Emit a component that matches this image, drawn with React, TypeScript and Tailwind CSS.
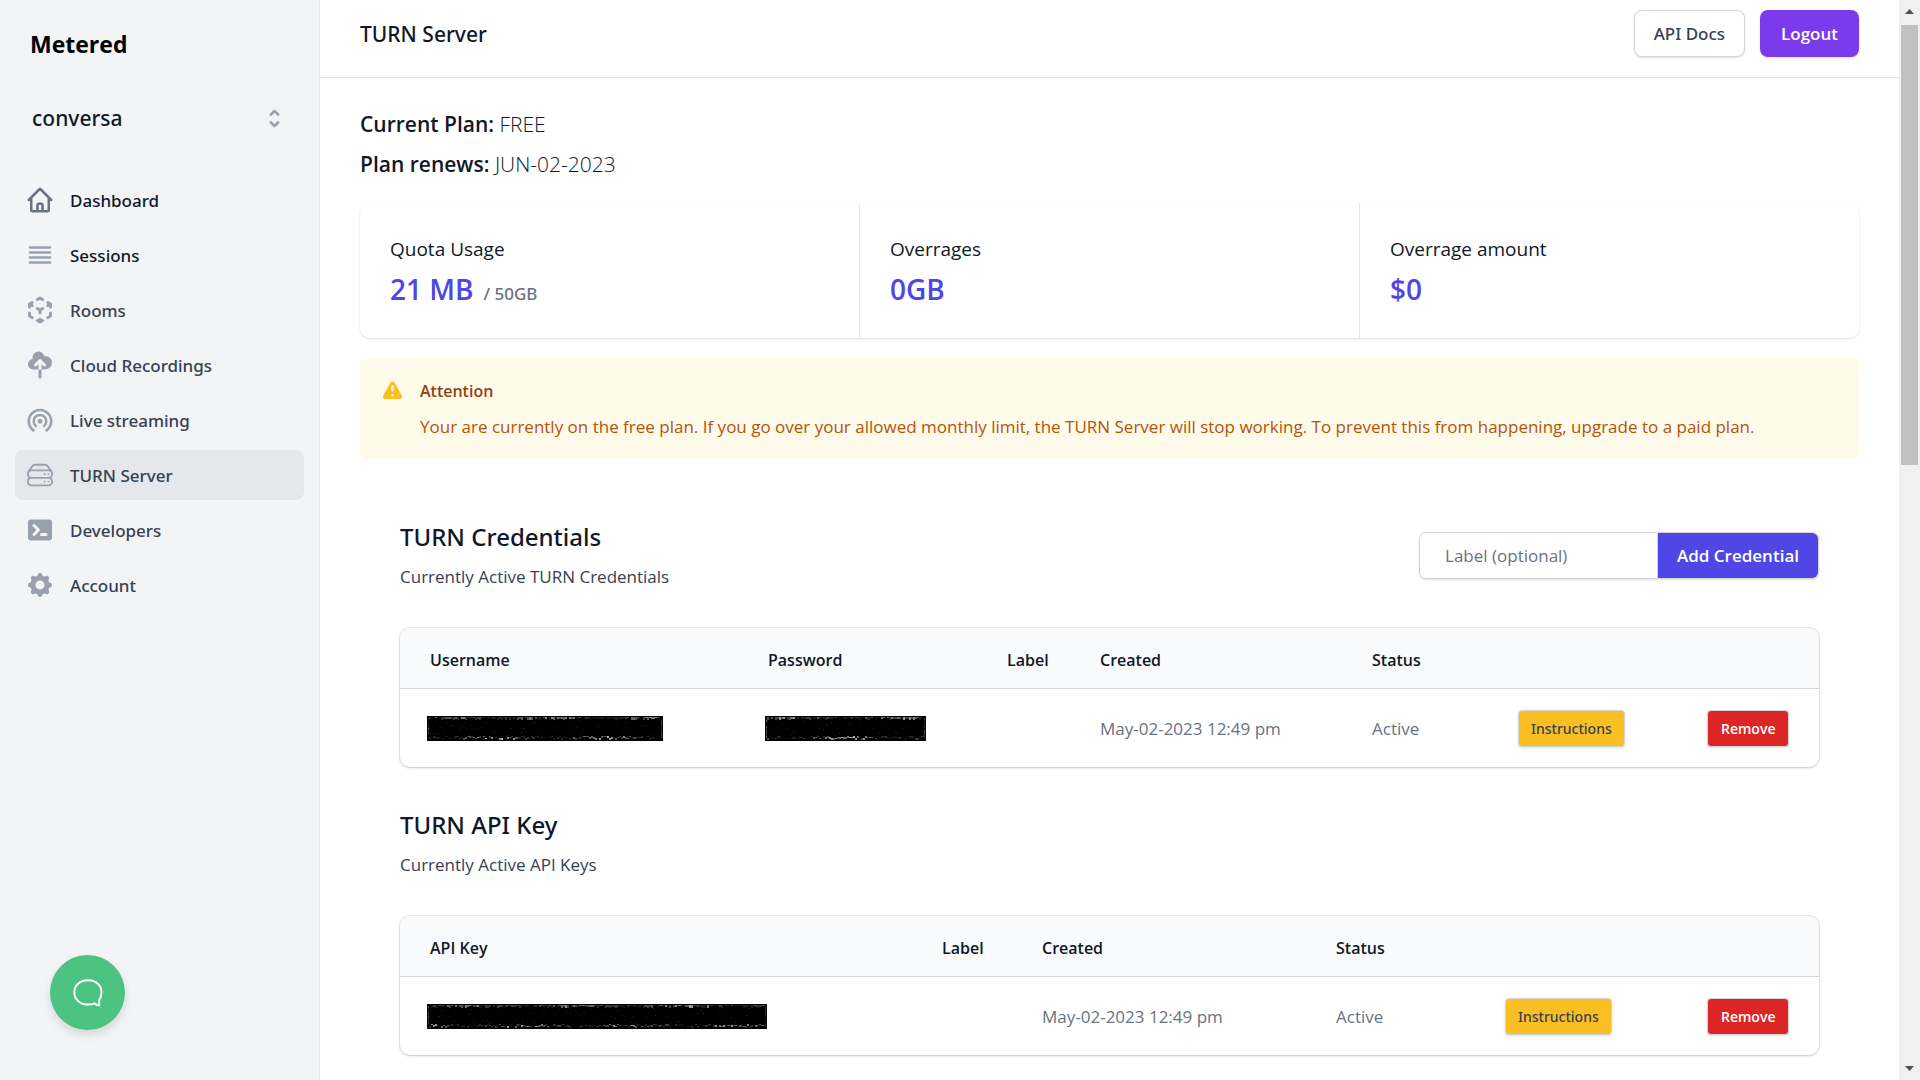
import type { ReactNode } from "react";
import {
  HiCloudUpload,
  HiCog,
  HiCubeTransparent,
  HiExclamation,
  HiOutlineHome,
  HiOutlineViewList,
  HiSelector,
  HiTerminal,
} from "react-icons/hi";
import { HiOutlineServerStack } from "react-icons/hi2";
import { MdWifiTethering } from "react-icons/md";

const navItems = [
  { label: "Dashboard", Icon: HiOutlineHome, text: "text-gray-900", icon: "text-gray-500" },
  { label: "Sessions", Icon: HiOutlineViewList, text: "text-gray-900", icon: "text-gray-400" },
  { label: "Rooms", Icon: HiCubeTransparent, text: "text-gray-700", icon: "text-gray-400" },
  { label: "Cloud Recordings", Icon: HiCloudUpload, text: "text-gray-700", icon: "text-gray-400" },
  { label: "Live streaming", Icon: MdWifiTethering, text: "text-gray-700", icon: "text-gray-400" },
  { label: "TURN Server", Icon: HiOutlineServerStack, text: "text-gray-700", icon: "text-gray-400", active: true },
  { label: "Developers", Icon: HiTerminal, text: "text-gray-700", icon: "text-gray-400" },
  { label: "Account", Icon: HiCog, text: "text-gray-700", icon: "text-gray-400" },
];

/* Black bar with pale specks along its edges, hiding a secret value. */
function Redacted({ width, seed, label }: { width: number; seed: number; label: string }) {
  let s = seed;
  const rnd = () => {
    s = (s * 1103515245 + 12345) % 2147483648;
    return s / 2147483648;
  };
  const specks: ReactNode[] = [];
  for (let x = 2; x < width - 3; x += 2) {
    const wave = 0.5 + 0.5 * Math.sin(x / 17 + seed);
    specks.push(
      <rect key={`t${x}`} x={x} y={1} width={2} height={1 + Math.round(rnd() * 2)} opacity={rnd() * 0.65 * (0.35 + wave * 0.65)} />,
      <rect key={`b${x}`} x={x} y={20 + Math.round(rnd() * 2)} width={2} height={1 + Math.round(rnd())} opacity={rnd() * 0.75 * (1 - wave * 0.8)} />,
      <rect key={`m${x}`} x={x} y={4 + Math.round(rnd() * 16)} width={1} height={1} opacity={rnd() * 0.15} />,
    );
  }
  for (let y = 2; y < 22; y += 2) {
    specks.push(
      <rect key={`l${y}`} x={1} y={y} width={1} height={2} opacity={rnd() * 0.4} />,
      <rect key={`r${y}`} x={width - 2} y={y} width={1} height={2} opacity={rnd() * 0.3} />,
    );
  }
  return (
    <svg role="img" aria-label={label} width={width} height={25} viewBox={`0 0 ${width} 25`} className="-ml-[3px] block bg-black" fill="#fff">
      {specks}
    </svg>
  );
}

function Sidebar() {
  return (
    <aside className="flex w-80 shrink-0 flex-col border-r border-gray-200 bg-gray-100">
      <div className="px-[30px] pt-7 text-[23px] leading-8 font-bold text-black">Metered</div>
      <button
        type="button"
        className="mx-8 mt-10 flex items-center justify-between text-left font-['Noto_Sans',sans-serif] text-[21px] leading-9 font-medium text-gray-900"
      >
        conversa
        <HiSelector className="size-[25px] text-gray-400" />
      </button>
      <nav className="mt-[39px] flex flex-col gap-[5px] px-[15px] font-['Noto_Sans',sans-serif]">
        {navItems.map(({ label, Icon, text, icon, active }) => (
          <a
            key={label}
            href="#"
            aria-current={active ? "page" : undefined}
            className={`flex h-[50px] items-center gap-[15px] rounded-lg px-2.5 text-[17px] font-medium ${text} ${active ? "bg-gray-200" : ""}`}
          >
            <Icon className={`size-[30px] shrink-0 ${icon}`} />
            <span className="pt-0.5">{label}</span>
          </a>
        ))}
      </nav>
      <button type="button" aria-label="Open chat" className="mt-auto mb-[50px] ml-[50px] flex size-[75px] items-center justify-center rounded-full bg-[#4cc380] shadow-[0_5px_10px_rgba(0,0,0,0.12)]">
        <svg width="30" height="28" viewBox="0 0 30 28" fill="none" stroke="#fff" strokeWidth="2" strokeLinejoin="round">
          <path d="M15 1.2C22.500 1.200 28.500 5.800 28.500 13.200C28.500 16.600 27.600 19 26.200 20.800V26.600C24.300 26.300 22.800 25.600 21.400 24.300C19.300 25.300 17 25.600 15 25.600C7.300 25.600 1.300 20.600 1.300 13.200C1.300 5.800 7.500 1.200 15 1.200Z" />
        </svg>
      </button>
    </aside>
  );
}

function Stat({ label, value, note }: { label: string; value: string; note?: string }) {
  return (
    <div className="flex-1 px-[30px] pt-[30px] pb-[26px]">
      <dt className="text-[19px] leading-8 text-gray-900">{label}</dt>
      <dd className="mt-1 flex h-[43px] items-baseline gap-2.5 text-[28px] leading-10 font-semibold text-[#4f46e5]">
        {value}
        {note && <span className="font-['Noto_Sans',sans-serif] text-[17px] leading-6 font-medium text-gray-500">{note}</span>}
      </dd>
    </div>
  );
}

function SectionTitle({ title, sub }: { title: string; sub: string }) {
  return (
    <div>
      <h2 className="font-['Noto_Sans',sans-serif] text-[24px] leading-[35px] font-medium text-gray-900">{title}</h2>
      <p className="mt-2.5 text-[17px] leading-[25px] text-gray-700">{sub}</p>
    </div>
  );
}

type Column = { head: string; width: string; cell: ReactNode };

function KeyTable({ columns }: { columns: Column[] }) {
  return (
    <div className="mt-[39px] overflow-hidden rounded-[10px] shadow-[0_0_0_1px_rgba(0,0,0,0.08),0_1px_3px_rgba(0,0,0,0.15)]">
      <table className="w-full table-fixed text-left text-[17px]">
        <thead className="bg-gray-50 text-gray-900">
          <tr className="h-[60px] border-b border-gray-300">
            {columns.map((c, i) => (
              <th
                key={i}
                scope="col"
                aria-label={c.head || "Action"}
                className={`pt-1 pl-[15px] text-[16px] font-semibold first:pl-[30px] ${c.width}`}
              >
                {c.head}
              </th>
            ))}
          </tr>
        </thead>
        <tbody className="text-gray-500">
          <tr className="h-[79px]">
            {columns.map((c, i) => (
              <td key={i} className="pt-0.5 pl-[15px] whitespace-nowrap first:pl-[30px]">
                {c.cell}
              </td>
            ))}
          </tr>
        </tbody>
      </table>
    </div>
  );
}

const instructions = (
  <button
    type="button"
    className="block h-[37px] rounded border border-gray-300 bg-[#fbbf24] px-3 font-['Noto_Sans',sans-serif] text-[14px] font-medium text-gray-700 shadow-sm"
  >
    Instructions
  </button>
);
const remove = (
  <button type="button" className="block h-[37px] rounded border border-gray-300 bg-[#dc2626] px-[13px] text-[14px] font-semibold text-white shadow-sm">
    Remove
  </button>
);

const credentialColumns: Column[] = [
  { head: "Username", width: "w-[353px]", cell: <Redacted width={236} seed={7} label="Hidden username" /> },
  { head: "Password", width: "w-[239px]", cell: <Redacted width={161} seed={19} label="Hidden password" /> },
  { head: "Label", width: "w-[93px]", cell: null },
  { head: "Created", width: "w-[272px]", cell: "May-02-2023 12:49 pm" },
  { head: "Status", width: "w-[146px]", cell: "Active" },
  { head: "", width: "w-auto", cell: instructions },
  { head: "", width: "w-[127px]", cell: remove },
];

const apiKeyColumns: Column[] = [
  { head: "API Key", width: "w-[527px]", cell: <Redacted width={340} seed={43} label="Hidden API key" /> },
  { head: "Label", width: "w-[100px]", cell: null },
  { head: "Created", width: "w-[294px]", cell: "May-02-2023 12:49 pm" },
  { head: "Status", width: "w-[169px]", cell: "Active" },
  { head: "", width: "w-auto", cell: instructions },
  { head: "", width: "w-[127px]", cell: remove },
];

function Scrollbar() {
  return (
    <div aria-hidden="true" className="flex w-[21px] shrink-0 flex-col items-center bg-[#f0f0f0]">
      <svg width="21" height="25" viewBox="0 0 21 25" className="shrink-0" fill="#505050">
        <path d="M6 14h9l-4.500-5z" />
      </svg>
      <div className="h-[440px] w-[17px] bg-[#c1c1c1]" />
      <svg width="21" height="21" viewBox="0 0 21 21" className="mt-auto shrink-0" fill="#505050">
        <path d="M6 7h9l-4.500 5z" />
      </svg>
    </div>
  );
}

export default function App() {
  return (
    <div className="flex h-screen overflow-hidden bg-white font-['Open_Sans',sans-serif]">
      <Sidebar />
      <main className="min-w-0 flex-1 overflow-hidden">
        <header className="flex items-start justify-between border-b border-gray-200 px-10 pt-2.5 pb-[18px]">
          <h1 className="font-['Noto_Sans',sans-serif] text-[21px] leading-[49px] font-medium text-gray-900">TURN Server</h1>
          <div className="flex gap-[15px]">
            <button
              type="button"
              className="h-[47px] rounded-lg border border-gray-300 bg-white px-[19px] font-['Noto_Sans',sans-serif] text-[17px] font-medium text-gray-700 shadow-sm"
            >
              API Docs
            </button>
            <button type="button" className="h-[47px] rounded-lg bg-[#7c3aed] px-[21px] text-[17px] font-semibold text-white shadow-sm">
              Logout
            </button>
          </div>
        </header>

        <div className="px-10 pt-[26px]">
          <div className="text-[21px] leading-10 font-semibold text-gray-900">
            <p>
              Current Plan: <span className="font-light">FREE</span>
            </p>
            <p>
              Plan renews: <span className="font-light">JUN-02-2023</span>
            </p>
          </div>

          <dl className="mt-[19px] flex divide-x divide-gray-200 rounded-[10px] bg-white shadow">
            <Stat label="Quota Usage" value="21 MB" note="/ 50GB" />
            <Stat label="Overrages" value="0GB" />
            <Stat label="Overrage amount" value="$0" />
          </dl>

          <div role="alert" className="mt-5 flex gap-[15px] rounded-[7px] bg-amber-50 px-5 pt-[21px] pb-5">
            <HiExclamation className="size-[25px] shrink-0 text-[#fbbf24]" />
            <div className="text-[17px] leading-[25px]">
              <h3 className="text-[16px] font-semibold text-[#92400e]">Attention</h3>
              <p className="mt-2.5 text-[#b45309]">
                Your are currently on the free plan. If you go over your allowed monthly limit, the TURN Server will stop working. To prevent this from
                happening, upgrade to a paid plan.
              </p>
            </div>
          </div>

          <section className="mt-[60px] px-10">
            <div className="flex items-start justify-between">
              <SectionTitle title="TURN Credentials" sub="Currently Active TURN Credentials" />
              <form className="mt-[13px] flex h-[47px] rounded-[7px] shadow-sm">
                <input
                  type="text"
                  aria-label="Label (optional)"
                  placeholder="Label (optional)"
                  className="w-[239px] rounded-l-[7px] border border-gray-300 bg-white px-[25px] text-[17px] text-gray-900 placeholder:text-gray-500"
                />
                <button type="button" className="rounded-r-[7px] border-y border-r border-gray-300 bg-[#4f46e5] px-[19px] text-[17px] font-semibold text-white">
                  Add Credential
                </button>
              </form>
            </div>
            <KeyTable columns={credentialColumns} />
          </section>

          <section className="mt-10 px-10">
            <SectionTitle title="TURN API Key" sub="Currently Active API Keys" />
            <KeyTable columns={apiKeyColumns} />
          </section>
        </div>
      </main>
      <Scrollbar />
    </div>
  );
}
